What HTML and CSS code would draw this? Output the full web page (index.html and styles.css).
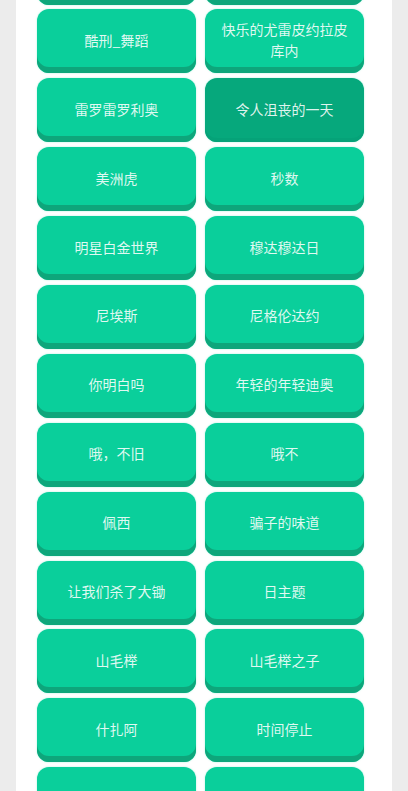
FILE: index.html
```html
<!DOCTYPE html>
<html lang="zh">
<head>
  <meta charset="UTF-8" />
  <meta name="viewport" content="width=device-width, initial-scale=1.0"/>
  <title>歌曲列表</title>
  <link rel="stylesheet" href="styles.css">
</head>
<body>
  <div class="panel">
    <div class="song-grid">
      <button class="song">黄金体验</button>
      <button class="song">疯狂钻石</button>
      <button class="song">酷刑_舞蹈</button>
      <button class="song">快乐的尤雷皮约拉皮库内</button>
      <button class="song">雷罗雷罗利奥</button>
      <button class="song active">令人沮丧的一天</button>
      <button class="song">美洲虎</button>
      <button class="song">秒数</button>
      <button class="song">明星白金世界</button>
      <button class="song">穆达穆达日</button>
      <button class="song">尼埃斯</button>
      <button class="song">尼格伦达约</button>
      <button class="song">你明白吗</button>
      <button class="song">年轻的年轻迪奥</button>
      <button class="song">哦，不旧</button>
      <button class="song">哦不</button>
      <button class="song">佩西</button>
      <button class="song">骗子的味道</button>
      <button class="song">让我们杀了大锄</button>
      <button class="song">日主题</button>
      <button class="song">山毛榉</button>
      <button class="song">山毛榉之子</button>
      <button class="song">什扎阿</button>
      <button class="song">时间停止</button>
      <button class="song">替身使者</button>
      <button class="song">天堂之门</button>
    </div>
  </div>
</body>
</html>
```

FILE: styles.css
```css
body {
  margin: 0;
  height: 100vh;
  overflow: hidden;
  background: #ececec;
  font-family: "Noto Sans CJK SC", "Noto Sans", sans-serif;
  font-size: 14px;
}
.panel {
  background: white;
  margin-left: 16px;
  width: 376px;
  min-height: 100vh;
  padding: 0 21px;
  box-sizing: border-box;
}
.song-grid {
  display: grid;
  grid-template-columns: 159px 159px;
  gap: 4.9px 9px;
  margin-top: -59.5px;
}
.song {
  height: 64px;
  border: none;
  border-radius: 12px;
  background: #0acf9b;
  box-shadow: inset 0 -6px 0 #0ea67b, 0 0 2px rgba(10, 207, 155, 0.35);
  color: rgba(255, 255, 255, 0.88);
  font-family: inherit;
  font-size: 14px;
  line-height: 21px;
  padding: 0 12px 2px;
  text-align: center;
  cursor: pointer;
}
.song.active {
  background: #06a87c;
  box-shadow: inset 0 -4px 0 #05a278, 0 0 2px rgba(10, 207, 155, 0.35);
}
```
